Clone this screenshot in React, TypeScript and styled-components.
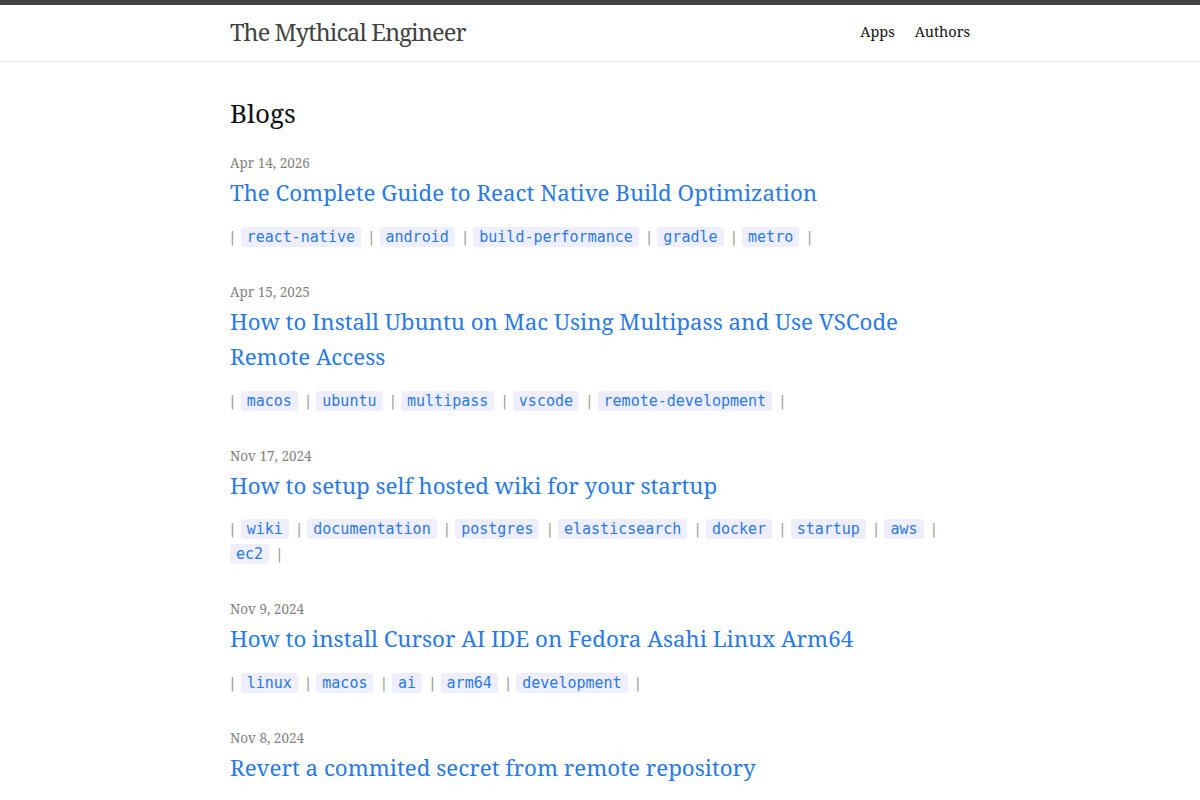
import React from "react";
import styled, { createGlobalStyle } from "styled-components";

const Global = createGlobalStyle`
  html, body { margin: 0; padding: 0; background: #fff; }
  body {
    font-family: "Noto Serif", "DejaVu Serif", serif;
    font-size: 16px;
    line-height: 1.5;
    color: #111;
    -webkit-font-smoothing: antialiased;
  }
`;

const Header = styled.header`
  border-top: 5px solid #424242;
  border-bottom: 1px solid #e8e8e8;
  min-height: 56px;
`;

const Wrapper = styled.div`
  max-width: 740px;
  margin: 0 auto;
  padding: 0 30px;
`;

const HeaderRow = styled(Wrapper)`
  display: flex;
  justify-content: space-between;
  align-items: center;
  height: 54px;
  padding-bottom: 2px;
`;

const SiteTitle = styled.a`
  font-size: 23.6px;
  line-height: 54px;
  letter-spacing: -0.9px;
  color: #424242;
  text-decoration: none;
`;

const Nav = styled.nav`
  display: flex;
  gap: 20px;
  padding-bottom: 2px;
`;

const NavLink = styled.a`
  color: #111;
  font-size: 14.5px;
  text-decoration: none;
  line-height: 50px;
`;

const Main = styled.main`
  padding: 32px 0;
`;

const PageHeading = styled.h1`
  font-size: 26px;
  font-weight: 400;
  margin: 0 0 18px;
  line-height: 39px;
`;

const PostList = styled.ul`
  list-style: none;
  margin: 0;
  padding: 0;
`;

const PostItem = styled.li`
  margin-bottom: 31px;
`;

const Meta = styled.span`
  display: block;
  font-size: 13.5px;
  line-height: 24px;
  color: #828282;
`;

const PostTitle = styled.h3`
  margin: 0;
  font-size: 22.3px;
  font-weight: 400;
  line-height: 35.5px;
`;

const PostLink = styled.a`
  color: #2a7ae2;
  text-decoration: none;
`;

const Tags = styled.div`
  margin-top: 13px;
  color: #828282;
  font-size: 15px;
  line-height: 24px;
`;

const Sep = styled.span`
  color: #9a9a9a;
  margin-right: 2px;
  font-family: "DejaVu Sans", sans-serif;
  font-size: 14px;
`;

const Tag = styled.code`
  font-family: "DejaVu Sans Mono", monospace;
  font-size: 15px;
  color: #2a7ae2;
  background: #eef;
  border-radius: 3px;
  padding: 1px 6px;
  margin-right: 4px;
`;

type Post = { date: string; title: string; tags: string[] };

const posts: Post[] = [
  {
    date: "Apr 14, 2026",
    title: "The Complete Guide to React Native Build Optimization",
    tags: ["react-native", "android", "build-performance", "gradle", "metro"],
  },
  {
    date: "Apr 15, 2025",
    title: "How to Install Ubuntu on Mac Using Multipass and Use VSCode Remote Access",
    tags: ["macos", "ubuntu", "multipass", "vscode", "remote-development"],
  },
  {
    date: "Nov 17, 2024",
    title: "How to setup self hosted wiki for your startup",
    tags: ["wiki", "documentation", "postgres", "elasticsearch", "docker", "startup", "aws", "ec2"],
  },
  {
    date: "Nov 9, 2024",
    title: "How to install Cursor AI IDE on Fedora Asahi Linux Arm64",
    tags: ["linux", "macos", "ai", "arm64", "development"],
  },
  {
    date: "Nov 8, 2024",
    title: "Revert a commited secret from remote repository",
    tags: [],
  },
];

export default function App() {
  return (
    <>
      <Global />
      <Header>
        <HeaderRow>
          <SiteTitle href="#">The Mythical Engineer</SiteTitle>
          <Nav>
            <NavLink href="#">Apps</NavLink>
            <NavLink href="#">Authors</NavLink>
          </Nav>
        </HeaderRow>
      </Header>
      <Main>
        <Wrapper>
          <PageHeading>Blogs</PageHeading>
          <PostList>
            {posts.map((p) => (
              <PostItem key={p.title}>
                <Meta>{p.date}</Meta>
                <PostTitle>
                  <PostLink href="#">{p.title}</PostLink>
                </PostTitle>
                {p.tags.length > 0 && (
                  <Tags>
                    {p.tags.map((t) => (
                      <React.Fragment key={t}>
                        <Sep>|</Sep> <Tag>{t}</Tag>{" "}
                      </React.Fragment>
                    ))}
                    <Sep>|</Sep>
                  </Tags>
                )}
              </PostItem>
            ))}
          </PostList>
        </Wrapper>
      </Main>
    </>
  );
}
